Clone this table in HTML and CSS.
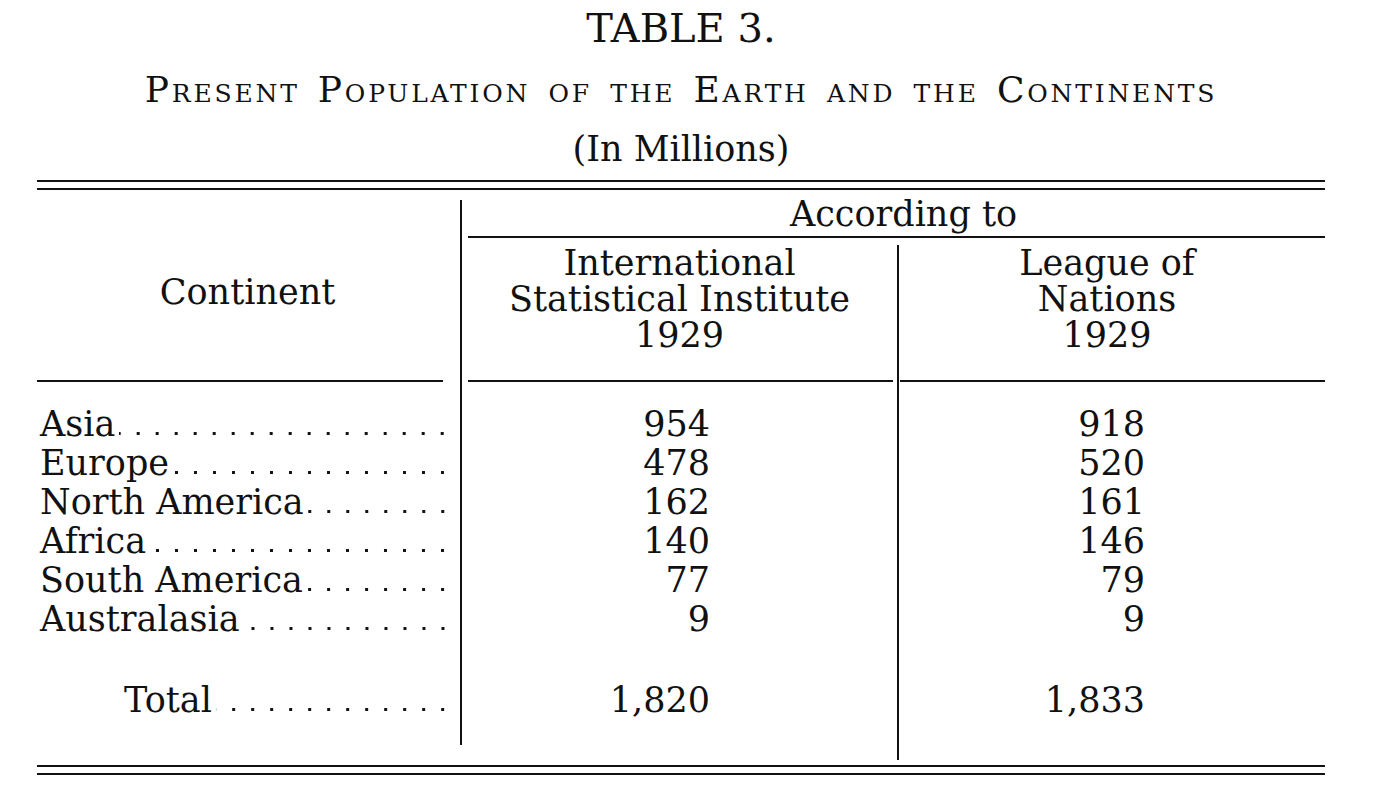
FILE: index.html
```html
<!DOCTYPE html>
<html lang="en">
<head>
<meta charset="utf-8">
<title>Table 3 — Present Population of the Earth and the Continents</title>
<link rel="stylesheet" href="styles.css">
</head>
<body>
<div class="page">
  <h1 class="title">TABLE 3.</h1>
  <h2 class="subtitle">Present Population of the Earth and the Continents</h2>
  <p class="unit">(In Millions)</p>

  <div class="double-rule"></div>

  <div class="tbl">
    <div class="vline vline-left"></div>
    <div class="vline vline-right"></div>

    <div class="hd-continent">Continent</div>
    <div class="hd-according">According to</div>
    <div class="hd-col hd-c1">
      <div class="hd-line">International</div>
      <div class="hd-line">Statistical Institute</div>
      <div class="hd-line">1929</div>
    </div>
    <div class="hd-col hd-c2">
      <div class="hd-line">League of</div>
      <div class="hd-line">Nations</div>
      <div class="hd-line">1929</div>
    </div>

    <div class="rule rule-l"></div>
    <div class="rule rule-c1"></div>
    <div class="rule rule-c2"></div>

    <div class="label r1"><span class="name">Asia</span><span class="dots"></span></div>
    <div class="num c1 r1">954</div>
    <div class="num c2 r1">918</div>

    <div class="label r2"><span class="name">Europe</span><span class="dots"></span></div>
    <div class="num c1 r2">478</div>
    <div class="num c2 r2">520</div>

    <div class="label r3"><span class="name">North America</span><span class="dots"></span></div>
    <div class="num c1 r3">162</div>
    <div class="num c2 r3">161</div>

    <div class="label r4"><span class="name">Africa</span><span class="dots"></span></div>
    <div class="num c1 r4">140</div>
    <div class="num c2 r4">146</div>

    <div class="label r5"><span class="name">South America</span><span class="dots"></span></div>
    <div class="num c1 r5">77</div>
    <div class="num c2 r5">79</div>

    <div class="label r6"><span class="name">Australasia</span><span class="dots"></span></div>
    <div class="num c1 r6">9</div>
    <div class="num c2 r6">9</div>

    <div class="label total rt"><span class="name">Total</span><span class="dots"></span></div>
    <div class="num c1 rt">1,820</div>
    <div class="num c2 rt">1,833</div>
  </div>

  <div class="double-rule bottom"></div>
</div>
</body>
</html>
```

FILE: styles.css
```css
html, body {
  margin: 0;
  padding: 0;
  background: #ffffff;
}

body {
  font-family: "DejaVu Serif", "Liberation Serif", serif;
  color: #111111;
}

.page {
  width: 1288px;
  padding-left: 37px;
}

.title {
  margin: 4px 0 0;
  font-size: 40px;
  line-height: 48px;
  font-weight: normal;
  text-align: center;
}

.subtitle {
  margin: 18px 0 0;
  font-size: 36px;
  line-height: 40px;
  font-weight: normal;
  font-variant: small-caps;
  letter-spacing: 2.8px;
  word-spacing: 4px;
  text-align: center;
}

.unit {
  margin: 19px 0 0;
  font-size: 35px;
  line-height: 40px;
  text-align: center;
}

.double-rule {
  margin-top: 11px;
  height: 6px;
  border-top: 2px solid #111;
  border-bottom: 2px solid #111;
}

.double-rule.bottom {
  margin-top: 5px;
}

.tbl {
  display: grid;
  grid-template-columns: 425px 435px 428px;
  grid-template-rows: 48px 142px 2px 23px repeat(6, 39px) 42px 39px 40px;
  font-size: 35px;
}

.vline {
  width: 2px;
  background: #111;
}

.vline-left {
  grid-column: 1;
  grid-row: 1 / 14;
  justify-self: end;
  margin: 10px 0 15px;
}

.vline-right {
  grid-column: 3;
  grid-row: 2 / 14;
  justify-self: start;
  margin-top: 7px;
}

.hd-continent {
  grid-column: 1;
  grid-row: 1 / 3;
  display: flex;
  align-items: center;
  justify-content: center;
  padding: 14px 4px 0 0;
  line-height: 36px;
}

.hd-according {
  grid-column: 2 / 4;
  grid-row: 1;
  margin-left: 6px;
  padding: 4px 0 0 14px;
  line-height: 40px;
  text-align: center;
  border-bottom: 2px solid #111;
}

.hd-col {
  grid-row: 2;
  display: flex;
  flex-direction: column;
  align-items: center;
  padding-top: 7px;
}

.hd-line {
  height: 36px;
  line-height: 36px;
  white-space: nowrap;
}

.hd-c1 {
  grid-column: 2;
}

.hd-c2 {
  grid-column: 3;
  padding-right: 8px;
}

.rule {
  grid-row: 3;
  border-top: 2px solid #111;
}

.rule-l {
  grid-column: 1;
  margin-right: 19px;
}

.rule-c1 {
  grid-column: 2;
  margin: 0 4px 0 6px;
}

.rule-c2 {
  grid-column: 3;
  margin-left: 3px;
}

.r1 { grid-row: 5; }
.r2 { grid-row: 6; }
.r3 { grid-row: 7; }
.r4 { grid-row: 8; }
.r5 { grid-row: 9; }
.r6 { grid-row: 10; }
.rt { grid-row: 12; }

.label {
  grid-column: 1;
  display: flex;
  align-items: baseline;
  padding: 0 10px 0 3px;
  line-height: 39px;
  white-space: nowrap;
}

.label.total {
  padding-left: 87px;
}

.dots {
  flex: 1;
  height: 5px;
  margin-left: 4px;
  background-image: radial-gradient(circle, #111 1.4px, transparent 1.9px);
  background-size: 19px 5px;
  background-repeat: repeat-x;
  background-position: right bottom;
}

.num {
  line-height: 39px;
  text-align: right;
}

.num.c1 {
  grid-column: 2;
  padding-right: 187px;
}

.num.c2 {
  grid-column: 3;
  padding-right: 180px;
}
```
